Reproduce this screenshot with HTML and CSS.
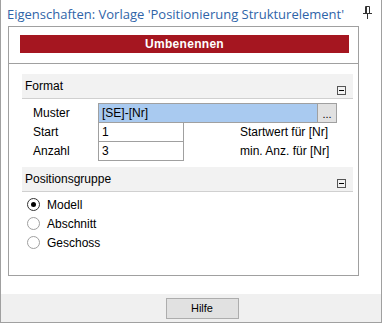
FILE: index.html
```html
<!doctype html>
<html>
  <head>
    <title>Eigenschaften</title>
    <link rel="stylesheet" href="styles.css">
  </head>
  <body>
    <div class="window">
      <div class="titlebar">
        <span class="title">Eigenschaften: Vorlage 'Positionierung Strukturelement'</span>
        <svg class="pin" width="9" height="13" viewBox="0 0 9 13">
          <path d="M2.5 0.5h4v7h-4z M0 7.5h9 M3.5 1v6 M4.5 8v5" fill="none" stroke="#333" stroke-width="1"/>
        </svg>
      </div>

      <div class="main">
        <div class="panel">
          <div class="rename-bar">
            <button class="rename">Umbenennen</button>
          </div>

          <!-- Format -->
          <section class="group">
            <div class="group-head">
              <span>Format</span>
              <span class="collapse"></span>
            </div>
            <div class="rows">
              <div class="row">
                <span class="label">Muster</span>
                <span class="field field-wide selected">[SE]-[Nr]</span>
                <span class="dots">...</span>
              </div>
              <div class="row">
                <span class="label">Start</span>
                <span class="field field-short">1</span>
                <span class="hint">Startwert für [Nr]</span>
              </div>
              <div class="row">
                <span class="label">Anzahl</span>
                <span class="field field-short">3</span>
                <span class="hint">min. Anz. für [Nr]</span>
              </div>
            </div>
          </section>

          <!-- Positionsgruppe -->
          <section class="group">
            <div class="group-head">
              <span>Positionsgruppe</span>
              <span class="collapse"></span>
            </div>
            <div class="radios">
              <label class="radio"><span class="dot checked"></span>Modell</label>
              <label class="radio"><span class="dot"></span>Abschnitt</label>
              <label class="radio"><span class="dot"></span>Geschoss</label>
            </div>
          </section>
        </div>
      </div>

      <div class="footer">
        <button class="help">Hilfe</button>
      </div>
    </div>
  </body>
</html>
```

FILE: styles.css
```css
body {
  margin: 0;
  font-family: "Liberation Sans", Arial, sans-serif;
  font-size: 12px;
  color: #000;
  background: #fff;
}

.window {
  box-sizing: border-box;
  width: 382px;
  height: 323px;
  border: 1px solid #a0a0a0;
  border-top: none;
  display: flex;
  flex-direction: column;
}

.titlebar {
  height: 26px;
  display: flex;
  align-items: center;
  justify-content: space-between;
  padding: 0 9px 0 6px;
}

.title {
  color: #2f64a8;
  font-family: "Open Sans", sans-serif;
  font-size: 13px;
  margin-top: 1px;
}

.pin {
  margin-top: -1px;
}

.main {
  padding: 0 22px 0 7px;
}

.panel {
  box-sizing: border-box;
  height: 250px;
  border: 1px solid #a0a0a0;
}

.rename-bar {
  padding: 8px 9px 10px 11px;
  border-bottom: 1px solid #a0a0a0;
}

.rename {
  display: block;
  width: 100%;
  height: 18px;
  border: none;
  background: #a51620;
  color: #fff;
  font-family: "Liberation Sans", Arial, sans-serif;
  font-weight: bold;
  font-size: 12px;
  letter-spacing: 0.3px;
  padding: 0;
}

.group {
  margin: 10px 5px 0 13px;
}

.group + .group {
  margin-top: 6px;
}

.group-head {
  height: 24px;
  background: #f2f2f2;
  border-bottom: 1px solid #d0d0d0;
  display: flex;
  justify-content: space-between;
  align-items: center;
  padding: 0 7px 0 3px;
}

.collapse {
  box-sizing: border-box;
  width: 9px;
  height: 9px;
  border: 1px solid #555;
  align-self: flex-end;
  margin-bottom: 3px;
  display: flex;
  align-items: center;
  justify-content: center;
}

.collapse::before {
  content: "";
  width: 5px;
  height: 1px;
  background: #000;
}

.rows {
  padding-top: 4px;
}

.row {
  display: flex;
  align-items: center;
  height: 20px;
}

.row + .row {
  margin-top: -1px;
}

.label {
  box-sizing: border-box;
  width: 76px;
  padding-left: 11px;
}

.field {
  box-sizing: border-box;
  height: 20px;
  border: 1px solid #a0a0a0;
  padding: 0 3px;
  line-height: 18px;
  background: #fff;
}

.field-wide {
  width: 220px;
}

.field-short {
  width: 86px;
}

.selected {
  background: #a9caf0;
}

.dots {
  box-sizing: border-box;
  width: 20px;
  height: 20px;
  margin-left: -1px;
  border: 1px solid #a0a0a0;
  background: #e1e1e1;
  font-size: 11px;
  line-height: 20px;
  text-align: center;
}

.hint {
  margin-left: 56px;
}

.radios {
  padding: 3px 0 0 5px;
}

.radio {
  display: flex;
  align-items: center;
  height: 19px;
}

.dot {
  box-sizing: border-box;
  width: 13px;
  height: 13px;
  border: 1px solid #a0a0a0;
  border-radius: 50%;
  margin-right: 7px;
  display: flex;
  align-items: center;
  justify-content: center;
}

.dot.checked {
  border-color: #333;
}

.dot.checked::before {
  content: "";
  width: 5px;
  height: 5px;
  border-radius: 50%;
  background: #000;
}

.footer {
  margin-top: auto;
  height: 28px;
  background: #f0f0f0;
  display: flex;
  justify-content: center;
  align-items: center;
}

.help {
  width: 73px;
  height: 21px;
  margin-left: 22px;
  border: 1px solid #adadad;
  background: #e1e1e1;
  font-family: "Liberation Sans", Arial, sans-serif;
  font-size: 11px;
  padding: 0;
}
```
